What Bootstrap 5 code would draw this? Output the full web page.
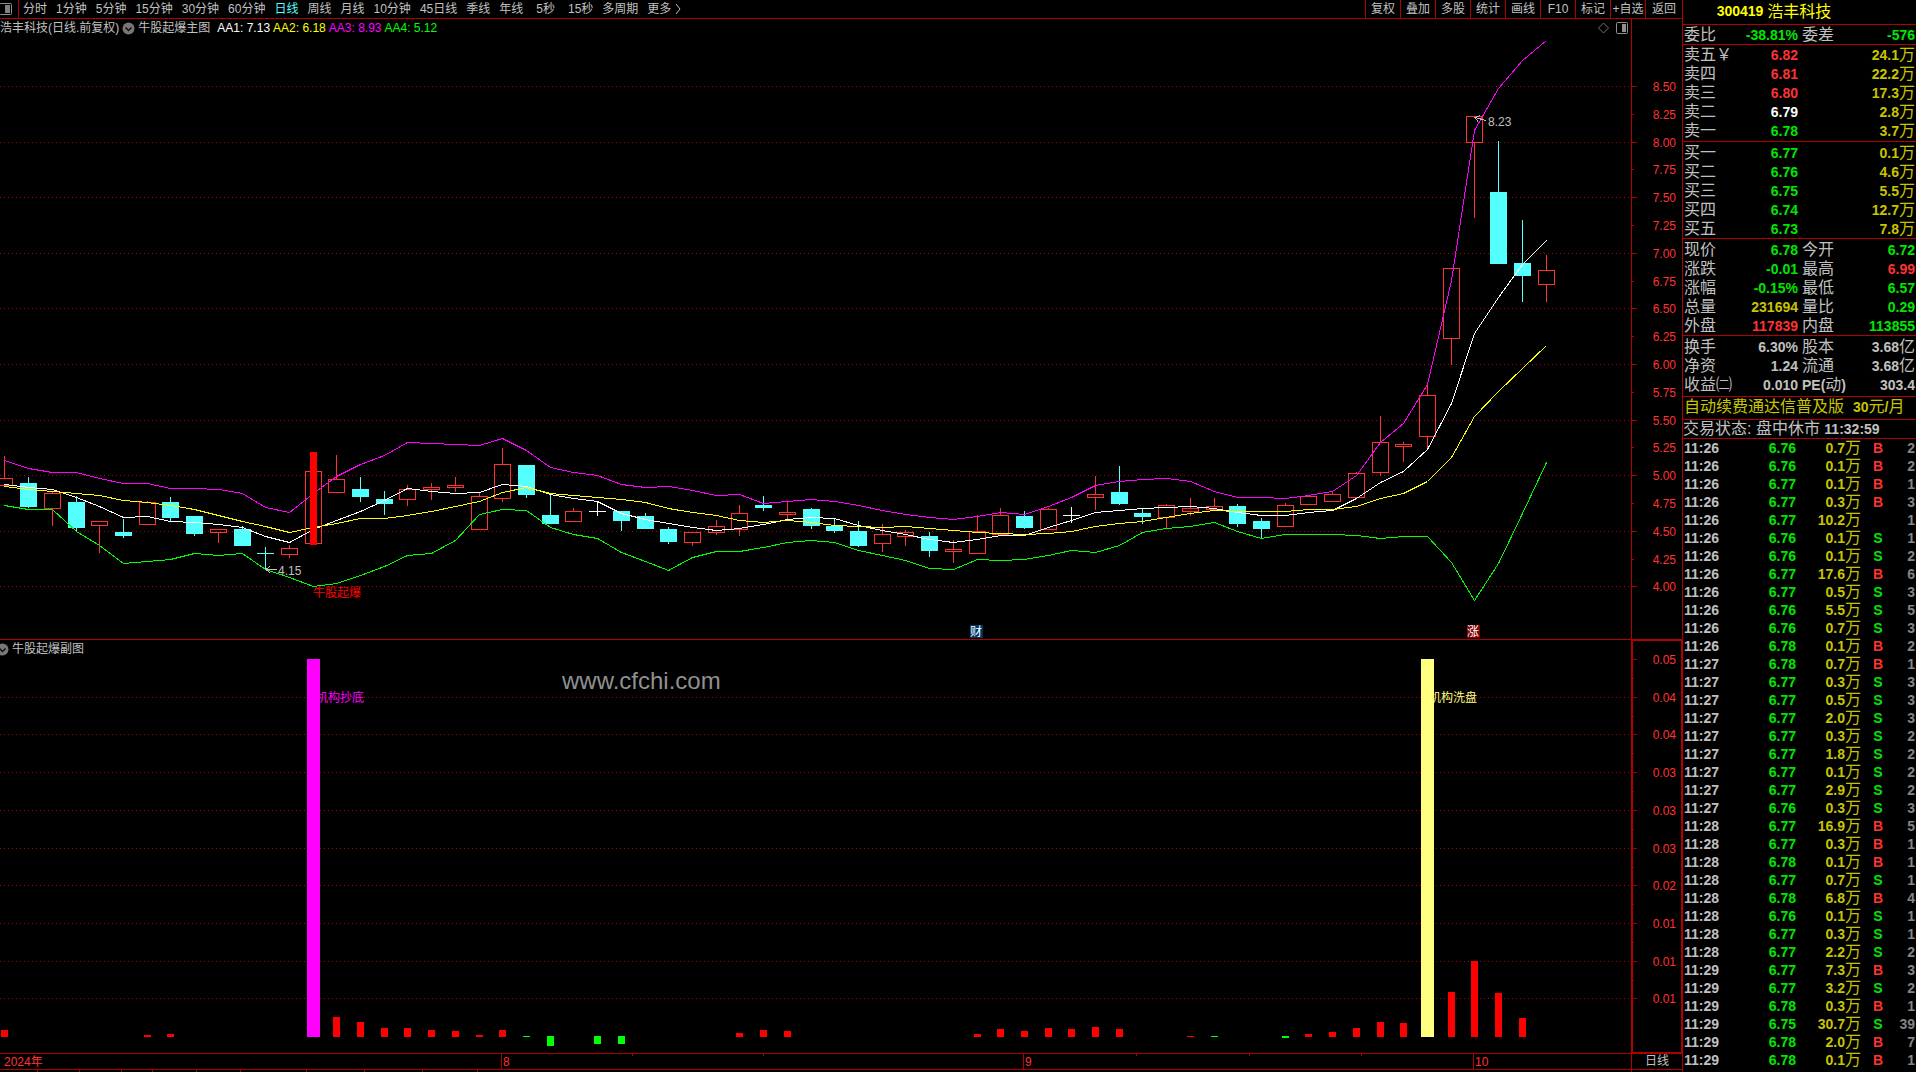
<!DOCTYPE html>
<html lang="zh-CN">
<head>
<meta charset="utf-8">
<meta name="viewport" content="width=device-width, initial-scale=1">
<title>浩丰科技 300419 日线</title>
<link href="https://cdn.jsdelivr.net/npm/bootstrap@5.3.0/dist/css/bootstrap.min.css" rel="stylesheet">
<style>
:root{--rule:#b00000;--up:#ff3232;--down:#00e600;--txt:#c0c0c0;--amt:#c8c400}
body{background:#000;color:var(--txt);font:12px/18px "Liberation Sans","Noto Sans CJK SC",sans-serif}
button{background:none;border:0;padding:0;color:inherit;font:inherit;white-space:nowrap}
svg{display:block}
.topbar{height:19px;border-bottom:1px solid var(--rule);line-height:14px}
.topbar .periods{gap:9px;padding-left:4px}
.topbar .dock{width:19px;border-right:1px solid var(--rule)}
.topbar .now{color:#54fcfc}
.tools button{width:35px;border-left:1px solid var(--rule)}
.tools button:last-child{width:37px}
.pane{min-height:0}
.pane-main{flex:620 1 0}
.pane-sub{flex:413 1 0}
.rule{height:1px;background:var(--rule)}
.scale{width:51px;border-left:1px solid var(--rule)}
.pane-sub .scale{border:1px solid var(--rule);border-left-width:2px}
.info{height:18px;line-height:18px;gap:3px;white-space:nowrap}
.plot{min-height:0;position:relative}
.plot svg,.scale svg{position:absolute;inset:0;width:100%;height:100%}
.scale{position:relative}
.timeline{height:19px;border-top:1px solid var(--rule)}
.timeline svg{width:100%;height:18px}
.cycle{width:51px;line-height:15px;border-left:1px solid var(--rule)}
.cycle span{display:block;border-bottom:1px solid var(--rule);height:16px}
.quote{width:234px;border-left:1px solid var(--rule);font-size:16px;line-height:19px;white-space:nowrap}
.quote section,.quote header{border-bottom:1px solid var(--rule);padding:0 1px}
.quote header{height:25px;line-height:19px;color:#ff0;padding:0 3px 2px 0}
.quote .line19{height:20px}
.quote .book{height:97px;padding-top:1px}
.quote .asks{padding-top:0}
.quote .fund{height:61px;padding-top:1px}
.quote .promo{height:23px;line-height:20px;color:var(--amt)}
.quote .state{height:19px;line-height:17px;padding:0}
.quote table{width:100%;table-layout:fixed;border-collapse:collapse}
.quote td,.quote th{padding:0;height:19px;line-height:19px;font-weight:400;overflow:visible}
.quote b{font-size:14px;line-height:1}
.quote .ticks td{height:18px;line-height:18px}
.ticks{padding:0 1px}
.c-lab{width:43px}.c-val{width:71px}.c-mid{width:48px}
.t-time{width:50px}.t-px{width:62px}.t-vol{width:65px}.t-bs{width:34px}
.up{color:var(--up)}.dn{color:var(--down)}.am{color:var(--amt)}.wh{color:#fff}.gr{color:#848484}
.y1{color:#ff0}.m1{color:#f0f}.g1{color:#0f0}
svg text{font:12px "Liberation Sans","Noto Sans CJK SC",sans-serif}
svg text.site{font-size:24px}
</style>
<script src="https://cdn.jsdelivr.net/npm/bootstrap@5.3.0/dist/js/bootstrap.bundle.min.js"></script>
</head>
<body>
<div class="d-flex vh-100 overflow-hidden">
<main class="d-flex flex-column flex-grow-1 overflow-hidden">
  <nav class="topbar d-flex flex-shrink-0" aria-label="周期">
    <button class="dock flex-shrink-0" aria-label="侧栏"><svg width="13" height="16" viewBox="0 0 13 16"><rect x="-.5" y="2.5" width="12" height="11" rx="1" fill="none" stroke="#909090"/><rect x="5" y="4" width="5" height="8" fill="#808080"/></svg></button>
    <div class="periods d-flex flex-grow-1 overflow-hidden">
      <button>分时</button><button>1分钟</button><button>5分钟</button><button>15分钟</button><button>30分钟</button><button>60分钟</button><button class="now">日线</button><button>周线</button><button>月线</button><button>10分钟</button><button>45日线</button><button>季线</button><button>年线</button><button class="px-1">5秒</button><button>15秒</button><button>多周期</button><button class="d-flex align-items-center">更多<svg class="ms-1" width="6" height="14" viewBox="0 0 6 14"><path d="M1 2l4 5-4 5" fill="none" stroke="#c0c0c0"/></svg></button>
    </div>
    <div class="tools d-flex flex-shrink-0">
      <button>复权</button><button>叠加</button><button>多股</button><button>统计</button><button>画线</button><button>F10</button><button>标记</button><button>+自选</button><button>返回</button>
    </div>
  </nav>

  <div class="pane pane-main d-flex">
    <div class="d-flex flex-column flex-grow-1">
      <div class="info d-flex flex-shrink-0 align-items-center">
        <span>浩丰科技(日线.前复权)</span>
        <svg width="13" height="13" viewBox="0 0 13 13"><circle cx="6.5" cy="6.5" r="6" fill="#777"/><path d="M3.500 5.500l3 3 3-3" fill="none" stroke="#111" stroke-width="1.500"/></svg>
        <span>牛股起爆主图</span><span class="wh ps-1">AA1: 7.13</span><span class="y1">AA2: 6.18</span><span class="m1">AA3: 8.93</span><span class="g1">AA4: 5.12</span>
        <svg class="ms-auto me-1" width="11" height="12" viewBox="0 0 11 12"><path d="M5.500 1l5 5-5 5-5-5z" fill="none" stroke="#707070"/></svg>
        <svg width="15" height="12" viewBox="2 0 15 12"><rect x="2.500" y=".5" width="11" height="11" rx="1" fill="none" stroke="#909090"/><rect x="8" y="2" width="4" height="8" fill="#909090"/></svg>
      </div>
      <div class="plot flex-grow-1"><svg id="kline" role="img" aria-label="日线K线图"></svg></div>
    </div>
    <div class="scale flex-shrink-0"><svg id="klineScale"></svg></div>
  </div>
  <div class="rule flex-shrink-0"></div>
  <div class="pane pane-sub d-flex">
    <div class="d-flex flex-column flex-grow-1">
      <div class="info d-flex flex-shrink-0 align-items-center">
        <svg width="9" height="13" viewBox="4 0 9 13"><circle cx="6.500" cy="6.500" r="6" fill="#777"/><path d="M3.500 5.500l3 3 3-3" fill="none" stroke="#111" stroke-width="1.500"/></svg>
        <span>牛股起爆副图</span>
      </div>
      <div class="plot flex-grow-1"><svg id="sub" role="img" aria-label="牛股起爆副图"></svg></div>
    </div>
    <div class="scale flex-shrink-0"><svg id="subScale"></svg></div>
  </div>
  <div class="timeline d-flex flex-shrink-0">
    <div class="flex-grow-1 overflow-hidden"><svg id="timeAxis"></svg></div>
    <div class="cycle flex-shrink-0 text-center"><span>日线</span></div>
  </div>
</main>

<aside class="quote flex-shrink-0 overflow-hidden">
  <header class="d-flex gap-1"><b class="ms-auto align-self-center">300419</b><span class="me-auto pe-5 align-self-center">浩丰科技</span></header>
  <section class="line19"><table><colgroup><col class="c-lab"><col class="c-val"><col class="c-mid"><col></colgroup>
    <tr><th scope="row">委比</th><td class="text-end dn"><b>-38.81%</b></td><th scope="row" class="ps-1">委差</th><td class="text-end dn"><b>-576</b></td></tr></table></section>
  <section class="book asks"><table id="asks"><colgroup><col class="c-lab"><col class="c-val"><col></colgroup></table></section>
  <section class="book"><table id="bids"><colgroup><col class="c-lab"><col class="c-val"><col></colgroup></table></section>
  <section class="book"><table><colgroup><col class="c-lab"><col class="c-val"><col class="c-mid"><col></colgroup>
    <tr><th scope="row">现价</th><td class="text-end dn"><b>6.78</b></td><th scope="row" class="ps-1">今开</th><td class="text-end dn"><b>6.72</b></td></tr>
    <tr><th scope="row">涨跌</th><td class="text-end dn"><b>-0.01</b></td><th scope="row" class="ps-1">最高</th><td class="text-end up"><b>6.99</b></td></tr>
    <tr><th scope="row">涨幅</th><td class="text-end dn"><b>-0.15%</b></td><th scope="row" class="ps-1">最低</th><td class="text-end dn"><b>6.57</b></td></tr>
    <tr><th scope="row">总量</th><td class="text-end am"><b>231694</b></td><th scope="row" class="ps-1">量比</th><td class="text-end dn"><b>0.29</b></td></tr>
    <tr><th scope="row">外盘</th><td class="text-end up"><b>117839</b></td><th scope="row" class="ps-1">内盘</th><td class="text-end dn"><b>113855</b></td></tr></table></section>
  <section class="fund"><table><colgroup><col class="c-lab"><col class="c-val"><col class="c-mid"><col></colgroup>
    <tr><th scope="row">换手</th><td class="text-end"><b>6.30%</b></td><th scope="row" class="ps-1">股本</th><td class="text-end"><b>3.68</b>亿</td></tr>
    <tr><th scope="row">净资</th><td class="text-end"><b>1.24</b></td><th scope="row" class="ps-1">流通</th><td class="text-end"><b>3.68</b>亿</td></tr>
    <tr><th scope="row">收益㈡</th><td class="text-end"><b>0.010</b></td><th scope="row" class="ps-1"><b>PE(</b>动<b>)</b></th><td class="text-end"><b>303.4</b></td></tr></table></section>
  <section class="promo">自动续费通达信普及版&nbsp; <b>30</b>元<b>/</b>月</section>
  <section class="state">交易状态: 盘中休市 <b>11:32:59</b></section>
  <div class="ticks"><table id="ticks"><colgroup><col class="t-time"><col class="t-px"><col class="t-vol"><col class="t-bs"><col></colgroup></table></div>
</aside>
</div>

<script>
// ---------- quote panel ----------
const row = html => `<tr>${html}</tr>`;
const level = ([n, p, v, c]) => row(`<th scope="row">${n}</th><td class="text-end ${c}"><b>${p}</b></td><td class="text-end am"><b>${v}</b>万</td>`);
asks.insertAdjacentHTML('beforeend', [['卖五￥','6.82','24.1','up'],['卖四','6.81','22.2','up'],['卖三','6.80','17.3','up'],['卖二','6.79','2.8','wh'],['卖一','6.78','3.7','dn']].map(level).join(''));
bids.insertAdjacentHTML('beforeend', [['买一','6.77','0.1','dn'],['买二','6.76','4.6','dn'],['买三','6.75','5.5','dn'],['买四','6.74','12.7','dn'],['买五','6.73','7.8','dn']].map(level).join(''));
const deals = `26 6.76 0.7 B 2|26 6.76 0.1 B 2|26 6.77 0.1 B 1|26 6.77 0.3 B 3|26 6.77 10.2 - 1|26 6.76 0.1 S 1|26 6.76 0.1 S 2|26 6.77 17.6 B 6|26 6.77 0.5 S 3|26 6.76 5.5 S 5|26 6.76 0.7 S 3|26 6.78 0.1 B 2|27 6.78 0.7 B 1|27 6.77 0.3 S 3|27 6.77 0.5 S 3|27 6.77 2.0 S 3|27 6.77 0.3 S 2|27 6.77 1.8 S 2|27 6.77 0.1 S 2|27 6.77 2.9 S 2|27 6.76 0.3 S 3|28 6.77 16.9 B 5|28 6.77 0.3 B 1|28 6.78 0.1 B 1|28 6.77 0.7 S 1|28 6.78 6.8 B 4|28 6.76 0.1 S 1|28 6.77 0.3 S 1|28 6.77 2.2 S 2|29 6.77 7.3 B 3|29 6.77 3.2 S 2|29 6.78 0.3 B 1|29 6.75 30.7 S 39|29 6.78 2.0 B 7|29 6.78 0.1 B 1`;
ticks.insertAdjacentHTML('beforeend', deals.split('|').map(d => {
  const [m, p, v, s, n] = d.split(' ');
  return row(`<td><b>11:${m}</b></td><td class="text-end dn"><b>${p}</b></td><td class="text-end am"><b>${v}</b>万</td><td class="text-center ${s === 'B' ? 'up' : 'dn'}"><b>${s === '-' ? '' : s}</b></td><td class="text-end gr"><b>${n}</b></td>`);
}).join(''));

// ---------- chart data ----------
// candle: kind, high, body top, body bottom, low (chart units); R hollow, C solid, W doji
const candles = `R 456 478 485 485|C 477 483 507 508|R 491 493 508 525|C 496 502 528 531|R 521 521 525 552|C 519 532 536 538|R 501 502 524 524|C 497 502 518 521|C 516 516 534 536|R 529 529 532 542|C 526 529 546 546|C 547 553 554 570|R 545 548 554 557|R 471 471 543 543|R 455 479 492 492|C 477 489 497 502|C 491 499 504 515|R 485 489 499 505|R 483 487 489 499|R 477 485 487 491|R 493 496 529 529|R 448 464 498 501|C 465 465 495 498|C 493 515 524 524|R 508 511 521 521|W 501 511 512 516|C 511 511 521 531|C 513 516 529 529|C 527 529 542 544|R 532 532 542 545|R 520 526 532 534|R 505 513 529 535|C 496 505 508 511|R 501 512 514 518|C 508 509 526 529|C 519 526 531 533|C 521 531 546 547|R 524 534 543 551|R 530 532 536 545|C 532 536 551 557|R 540 549 551 562|R 515 531 553 553|R 508 515 534 534|C 511 516 528 529|R 508 509 529 529|W 507 515 516 523|R 476 494 497 509|C 466 492 504 505|C 509 513 517 524|R 504 505 517 528|R 498 508 511 515|R 498 506 509 509|C 504 506 524 527|C 518 521 529 538|R 503 505 526 526|R 495 496 504 504|R 491 494 501 501|R 472 473 497 497|R 416 442 472 475|R 442 444 446 461|R 384 395 436 449|R 268 268 338 364|R 116 116 142 217|C 141 192 264 264|C 220 263 276 302|R 255 270 284 301`.split('|').map(s => s.split(' '));
const curves = [
 ['#ffffff', [484,487,489,497,506,517,516,521,522,524,527,536,542,529,520,511,500,488,491,493,492,484,486,494,498,501,513,519,523,527,530,528,524,519,517,518,525,530,534,539,542,539,535,535,527,520,512,510,508,507,506,508,512,515,515,512,510,498,482,471,449,403,333,297,264,240]],
 ['#ffff00', [486,489,491,493,495,500,502,505,509,515,521,526,532,527,523,518,518,515,511,506,501,492,487,493,495,497,499,502,508,512,515,520,522,520,522,525,526,527,526,528,530,532,533,534,533,531,526,523,521,517,513,510,511,511,511,509,509,506,498,493,481,457,416,391,368,345]],
 ['#ff00ff', [460,468,472,472,478,483,483,488,488,489,493,507,512,493,476,464,455,442,443,444,445,438,450,467,472,475,484,487,486,490,495,494,503,501,499,501,505,510,514,517,519,516,512,514,506,497,485,481,479,478,481,491,497,497,498,495,491,475,442,423,384,280,130,88,60,40]],
 ['#00ff00', [505,509,509,531,545,563,561,559,553,555,553,569,577,586,583,575,566,555,553,540,514,509,510,527,534,538,552,561,570,557,551,551,547,542,540,542,550,555,560,568,569,559,560,559,555,550,552,545,532,528,526,522,531,538,534,534,534,535,538,536,536,562,600,563,513,462]]];
// histogram: index -> bar end
const BASE = 1037;
const hist = {0:1030,6:1035,7:1034,14:1017,15:1022,16:1028,17:1028,18:1030,19:1031,20:1035,21:1030,31:1033,32:1030,33:1031,41:1034,42:1029,43:1031,44:1028,45:1029,46:1027,47:1029,50:1036,55:1034,56:1032,57:1028,58:1022,59:1023,61:992,62:961,63:993,64:1018};
const histDown = {22:1037,23:1046,25:1044,26:1044,51:1037,54:1038};

const R = '#b00000', RED = '#ff3232', CYAN = '#54ffff';
const rect = (x, y, w, h, f) => `<rect x="${x}" y="${y}" width="${w}" height="${h}" fill="${f}"/>`;
const box = (x, y, w, h, c) => `<rect x="${x + .5}" y="${y + .5}" width="${w - 1}" height="${Math.max(h - 1, 1)}" fill="none" stroke="${c}"/>`;
const dots = (y, w) => `<line x1="0" x2="${w}" y1="${y + .5}" y2="${y + .5}" stroke="${R}" stroke-dasharray="1 3"/>`;
const label = (x, y, s, c, extra = '') => `<text x="${x}" y="${y}" fill="${c}" ${extra}>${s}</text>`;
const SPAN = 1631, HEAD = 18;

function draw() {
  const W = kline.clientWidth, k = W / SPAN;
  const X = i => Math.round((4.4 + 23.71 * i) * k), U = x => Math.round(x * k);
  const h1 = kline.clientHeight, Y = v => Math.round((v - 37) * h1 / 602);
  const h2 = sub.clientHeight, Z = v => Math.round((v - 658) * h2 / 395);

  // main chart
  let s = '', a = '';
  for (let p = 850, n = 0; p >= 400; p -= 25, n++) {
    const y = Y(86 + n * 27.8);
    if (n % 2 === 0) s += dots(y, W);
    a += rect(0, y + HEAD, n % 2 ? 2 : 5, 1, R) + label(44, y + HEAD + 5, (p / 100).toFixed(2), RED, 'text-anchor="end"');
  }
  candles.forEach(([t, hi, top, bot, lo], i) => {
    const x = X(i), y1 = Y(hi), y2 = Y(top), y3 = Y(bot), y4 = Y(lo);
    if (t === 'R') s += rect(x, y1, 1, y2 - y1, RED) + rect(x, y3, 1, y4 - y3 + 1, RED) + box(x - 8, y2, 17, y3 - y2 + 1, RED);
    else {
      const c = t === 'W' ? '#fff' : CYAN;
      s += rect(x, y1, 1, y4 - y1, c) + rect(x - 8, y2, 17, y3 - y2, c);
    }
  });
  curves.forEach(([c, v]) => s += `<polyline fill="none" stroke="${c}" points="${v.map((q, i) => (X(i) + .5) + ',' + (Y(q) + .5)).join(' ')}"/>`);
  s += rect(X(13) - 3, Y(452), 7, Y(545) - Y(452), '#f00');
  s += `<path d="M${X(11) + 12} ${Y(569) + .5}h-11m4 -3l-4 3l4 3M${X(62) + 12} ${Y(120) + .5}l-11 -3m5 -2l-5 2l3 4" fill="none" stroke="#c0c0c0"/>`;
  s += label(X(11) + 13, Y(575), '4.15', '#c0c0c0') + label(X(62) + 14, Y(126), '8.23', '#c0c0c0');
  s += label(X(13), Y(597), '牛股起爆', '#f00');
  s += rect(U(970), Y(625), 13, 13, '#003366') + label(U(970), Y(636), '财', '#fff');
  s += rect(U(1467), Y(625), 13, 13, '#800000') + label(U(1467), Y(636), '涨', '#fff');
  kline.innerHTML = `<g shape-rendering="crispEdges">${s}</g>`;
  klineScale.innerHTML = `<g shape-rendering="crispEdges">${a}</g>`;

  // lower chart
  s = ''; a = '';
  ['0.05','0.04','0.04','0.03','0.03','0.03','0.02','0.01','0.01','0.01'].forEach((t, n) => {
    const y = Z(659 + n * 37.7);
    if (n) s += dots(y, W);
    a += rect(0, y + HEAD - 1, 4, 1, R) + label(43, y + HEAD + 4, t, RED, 'text-anchor="end"');
    if (n < 9) a += rect(0, Z(678 + n * 37.7) + HEAD - 1, 1, 1, R);
  });
  for (const i in hist) s += rect(X(+i) - 3, Z(hist[i]), 7, Z(BASE) - Z(hist[i]), '#f00');
  for (const i in histDown) s += rect(X(+i) - 3, Z(1036), 7, Z(histDown[i]) - Z(1036), '#0f0');
  s += label(X(13) + 3, Z(702), '机构抄底', '#f0f') + label(X(60) + 2, Z(702), '机构洗盘', '#ffff80');
  s += rect(X(13) - 6, Z(659), 13, Z(BASE) - Z(659), '#f0f') + rect(X(60) - 6, Z(659), 13, Z(BASE) - Z(659), '#ffff80');
  s += label(U(562), Z(689), 'www.cfchi.com', '#909090', 'class="site"');
  sub.innerHTML = `<g shape-rendering="crispEdges">${s}</g>`;
  subScale.innerHTML = `<g shape-rendering="crispEdges">${a}</g>`;

  // time axis
  s = rect(0, 15, W, 1, R) + label(4, 12, '2024年', RED);
  [[501, '8'], [1023, '9'], [1473, '10']].forEach(([x, t]) => s += rect(U(x), 0, 1, 15, R) + label(U(x) + 2, 12, t, RED));
  [632, 763, 1136, 1249, 1361].forEach(x => s += rect(U(x), 0, 1, 2, R));
  [37, 79, 121, 152, 196, 240, 306, 364, 422, 477].forEach(x => s += rect(U(x), 16, 1, 2, R));
  timeAxis.innerHTML = `<g shape-rendering="crispEdges">${s}</g>`;
}
draw();
addEventListener('resize', draw);
</script>
</body>
</html>
